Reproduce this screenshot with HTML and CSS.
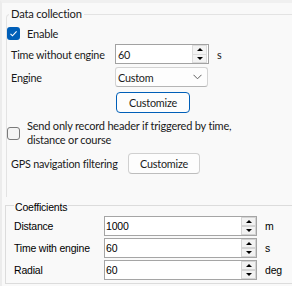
FILE: index.html
```html
<!DOCTYPE html>
<html>
<head>
<meta charset="utf-8">
<link rel="stylesheet" href="styles.css">
</head>
<body>
<div class="panel">
  <fieldset class="grp1">
    <legend>Data collection</legend>
    <div class="row r-enable">
      <span class="cb checked"><svg width="13" height="13" viewBox="0 0 13 13"><path d="M3.5 6.8 L5.5 8.8 L9.6 4.4" fill="none" stroke="#fff" stroke-width="1.1"/></svg></span>
      <span class="cbtext">Enable</span>
    </div>
    <div class="row r-field">
      <span class="lbl">Time without engine</span>
      <div class="spin1">
        <span class="val">60</span>
        <div class="sbtns"><span class="sb"><i class="up"></i></span><span class="sb"><i class="dn"></i></span></div>
      </div>
      <span class="unit1">s</span>
    </div>
    <div class="row r-combo">
      <span class="lbl">Engine</span>
      <div class="combo">
        <span class="val">Custom</span>
        <svg class="chev" width="9" height="6" viewBox="0 0 9 6"><path d="M0.5 0.8 L4.5 4.8 L8.5 0.8" fill="none" stroke="#5f5f5f" stroke-width="1"/></svg>
      </div>
    </div>
    <div class="row r-btn">
      <button class="btn focus">Customize</button>
    </div>
    <div class="row r-send">
      <span class="cb"></span>
      <span class="cbtext">Send only record header if triggered by time,<br>distance or course</span>
    </div>
    <div class="row r-gps">
      <span class="lbl gps">GPS navigation filtering</span>
      <button class="btn b2">Customize</button>
    </div>
  </fieldset>
  <fieldset class="grp2">
    <legend>Coefficients</legend>
    <div class="crow">
      <span class="clbl">Distance</span>
      <div class="spin2"><span class="val">1000</span><div class="sbtns2"><span class="sb2"><i class="up"></i></span><span class="sb2"><i class="dn"></i></span></div></div>
      <span class="unit2">m</span>
    </div>
    <div class="crow">
      <span class="clbl">Time with engine</span>
      <div class="spin2"><span class="val">60</span><div class="sbtns2"><span class="sb2"><i class="up"></i></span><span class="sb2"><i class="dn"></i></span></div></div>
      <span class="unit2">s</span>
    </div>
    <div class="crow">
      <span class="clbl">Radial</span>
      <div class="spin2"><span class="val">60</span><div class="sbtns2"><span class="sb2"><i class="up"></i></span><span class="sb2"><i class="dn"></i></span></div></div>
      <span class="unit2">deg</span>
    </div>
  </fieldset>
</div>
</body>
</html>
```
FILE: styles.css
```css
html, body {
  margin: 0;
  padding: 0;
}
body {
  width: 292px;
  height: 286px;
  overflow: hidden;
  background: #f9f9f9;
  font-family: Lato, "Liberation Sans", sans-serif;
  font-size: 10.8px;
  letter-spacing: -0.2px;
  color: #1a1a1a;
}
.panel {
  height: 286px;
  border-left: 2px solid #ececec;
  box-sizing: border-box;
  border-top: 3px solid #f0f0f0;
  display: flex;
  flex-direction: column;
  white-space: nowrap;
}
fieldset {
  margin: 0;
  min-width: 0;
}
.grp1 {
  margin-top: 4px;
  margin-left: 4px;
  width: 320px;
  height: 190px;
  flex: none;
  box-sizing: border-box;
  border: 1px solid #e3e3e3;
  border-bottom: none;
  border-radius: 4px 0 0 0;
  padding: 0;
}
.grp1 legend {
  padding: 0 2px;
  margin-left: 2px;
  line-height: 14px;
  font-size: 11.2px;
}
.row {
  display: flex;
  align-items: center;
}
.r-enable { margin-top: 5px; height: 15px; }
.r-field { margin-top: 3px; height: 20px; }
.r-combo { margin-top: 3px; height: 20px; }
.r-btn { margin-top: 5px; height: 21px; padding-left: 109px; }
.r-send { margin-top: 6px; height: 28px; }
.r-gps { margin-top: 6px; height: 21px; }
.cb {
  width: 13px;
  height: 13px;
  box-sizing: border-box;
  border: 1px solid #7a7a7a;
  border-radius: 3px;
  background: #f4f4f4;
  flex: none;
  display: block;
}
.cb.checked {
  border: none;
  background: #005fb8;
}
.cb svg { display: block; }
.cbtext {
  margin-left: 7px;
  line-height: 14px;
  font-size: 11px;
}
.lbl {
  padding-left: 4px;
  width: 104px;
  flex: none;
  box-sizing: content-box;
}
.lbl.gps { width: 117px; }
.spin1 {
  width: 94px;
  height: 20px;
  box-sizing: border-box;
  border: 1px solid #a2a2a2;
  background: #fff;
  display: flex;
  align-items: center;
}
.spin1 .val { flex: 1; padding-left: 2px; }
.sbtns {
  width: 15px;
  height: 18px;
  margin-right: 1px;
  display: flex;
  flex-direction: column;
}
.sb {
  flex: 1;
  border: 1px solid #dcdcdc;
  background: #f3f3f3;
  display: flex;
  align-items: center;
  justify-content: center;
}
.sb + .sb { border-top: none; }
i.up, i.dn {
  display: block;
  width: 0;
  height: 0;
  border-left: 3px solid transparent;
  border-right: 3px solid transparent;
}
i.up { border-bottom: 3px solid #000; }
i.dn { border-top: 3px solid #000; }
.unit1 { margin-left: 8px; }
.combo {
  width: 93px;
  height: 20px;
  box-sizing: border-box;
  border: 1px solid #d3d3d3;
  border-bottom-color: #b5b5b5;
  border-radius: 3px;
  background: #fdfdfd;
  display: flex;
  align-items: center;
  padding-left: 2px;
  padding-right: 5px;
}
.combo .val { flex: 1; }
.chev { display: block; }
.btn {
  font: inherit;
  letter-spacing: inherit;
  color: #1a1a1a;
  height: 21px;
  box-sizing: border-box;
  background: #fdfdfd;
  border: 1px solid #d0d0d0;
  border-bottom-color: #bdbdbd;
  border-radius: 4px;
  padding: 0;
  margin: 0;
}
.btn.focus {
  width: 74px;
  border: 1px solid #005fb8;
}
.btn.b2 { width: 72px; }
.grp2 {
  margin-top: 0;
  margin-left: 3px;
  width: 320px;
  flex: none;
  box-sizing: border-box;
  border: 1px solid #dcdcdc;
  padding: 0 0 3px 8px;
  font-family: "Liberation Sans", Arial, sans-serif;
  font-size: 10.5px;
  letter-spacing: -0.2px;
  color: #000;
}
.grp2 legend {
  padding: 4px 1px 0 1px;
  line-height: 12px;
  margin-left: 0;
}
.crow {
  display: flex;
  align-items: center;
  height: 20px;
}
.crow:first-of-type { margin-top: 3px; }
.crow + .crow { margin-top: 2px; }
.clbl { width: 90px; flex: none; }
.spin2 {
  width: 153px;
  height: 20px;
  box-sizing: border-box;
  border: 1px solid #a5a5a5;
  background: #fff;
  display: flex;
  align-items: center;
}
.spin2 .val { flex: 1; padding-left: 1px; }
.sbtns2 {
  width: 15px;
  height: 18px;
  display: flex;
  flex-direction: column;
}
.sb2 {
  flex: 1;
  border: 1px solid #d4d4d4;
  background: #f2f2f2;
  display: flex;
  align-items: center;
  justify-content: center;
}
.unit2 { margin-left: 8px; }
```
